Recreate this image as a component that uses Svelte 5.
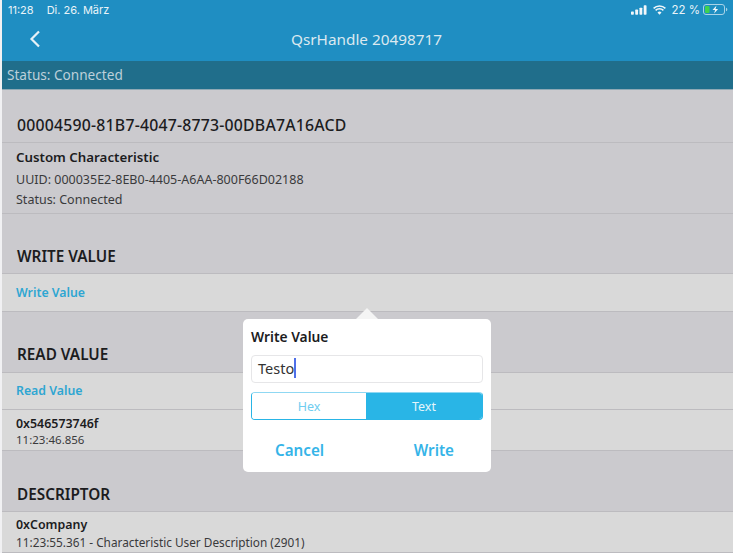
<script>
  let mode = 'Text';
  let value = 'Testo';
</script>

<div class="screen">
  <div class="topbar">
    <div class="statusbar">
      <span class="clock">11:28</span>
      <span class="date">Di. 26. März</span>
      <span class="spacer"></span>
      <svg class="signal" width="16" height="10" viewBox="0 0 17 10">
        <rect x="0" y="6.5" width="3" height="3.5" rx="0.7" />
        <rect x="4.5" y="4.5" width="3" height="5.5" rx="0.7" />
        <rect x="9" y="2.5" width="3" height="7.5" rx="0.7" />
        <rect x="13.5" y="0" width="3" height="10" rx="0.7" />
      </svg>
      <svg class="wifi" width="13" height="10" viewBox="0 0 13 10">
        <path d="M0.6 3.4a8.4 8.4 0 0 1 11.8 0" />
        <path d="M2.6 5.4a5.5 5.5 0 0 1 7.8 0" />
        <path class="dot" d="M6.5 9.8 4.5 7.5a2.8 2.8 0 0 1 4 0z" />
      </svg>
      <span class="pct">22 %</span>
      <svg class="battery" width="25" height="11" viewBox="0 0 25 11">
        <rect x="0.5" y="0.5" width="21" height="10" rx="2.5" class="shell" />
        <rect x="2" y="2" width="4.5" height="7" rx="1" class="level" />
        <path d="M13.5 1.5 9.5 6h2.6l-1 3.5 4-4.5h-2.6z" class="bolt" />
        <path d="M23 3.7c1 .3 1.3 1 1.3 1.8s-.3 1.5-1.3 1.8z" class="nub" />
      </svg>
    </div>
    <div class="navbar">
      <svg class="back" width="12" height="18" viewBox="0 0 12 18">
        <path d="M10 1.5 2.5 9l7.5 7.5" />
      </svg>
      <span class="title">QsrHandle 20498717</span>
    </div>
  </div>
  <div class="connection">Status: Connected</div>

  <div class="content">
    <h2 class="uuid">00004590-81B7-4047-8773-00DBA7A16ACD</h2>
    <div class="info">
      <strong>Custom Characteristic</strong>
      <span>UUID: 000035E2-8EB0-4405-A6AA-800F66D02188</span>
      <span>Status: Connected</span>
    </div>

    <h3 class="first">WRITE VALUE</h3>
    <div class="row action">Write Value</div>

    <h3>READ VALUE</h3>
    <div class="row action short">Read Value</div>
    <div class="row value read">
      <strong>0x546573746f</strong>
      <span>11:23:46.856</span>
    </div>

    <h3 class="last">DESCRIPTOR</h3>
    <div class="row value">
      <strong>0xCompany</strong>
      <span class="long">11:23:55.361 - Characteristic User Description (2901)</span>
    </div>
  </div>

  <div class="popover">
    <div class="arrow"></div>
    <div class="pop-title">Write Value</div>
    <div class="field"><span>{value}</span><i class="caret"></i></div>
    <div class="segment">
      {#each ['Hex', 'Text'] as m}
        <button class:on={mode === m} onclick={() => (mode = m)}>{m}</button>
      {/each}
    </div>
    <div class="buttons">
      <button>Cancel</button>
      <button>Write</button>
    </div>
  </div>
</div>

<style>
  :global(body) {
    background: #f1f1f3;
    overflow: hidden;
  }

  .screen {
    position: relative;
    width: 733px;
    height: 553px;
    padding-left: 2px;
    box-sizing: border-box;
    overflow: hidden;
    font-family: "Noto Sans", sans-serif;
    color: #1f1f21;
  }

  .topbar {
    background: #1f8ec2;
    color: #e9f3f8;
    height: 61px;
  }

  .statusbar {
    display: flex;
    align-items: center;
    height: 18px;
    padding: 1px 5px 0 6px;
    box-sizing: border-box;
    font-size: 11px;
    font-family: "Inter", sans-serif;
  }
  .clock { margin-right: 13px; }
  .spacer { flex: 1; }
  .signal { fill: #f2f7fa; margin-right: 6px; }
  .wifi { margin-right: 5px; fill: none; stroke: #f2f7fa; stroke-width: 1.5; }
  .wifi .dot { fill: #f2f7fa; stroke: none; }
  .pct { margin-right: 3px; font-size: 11.5px; }
  .shell { fill: none; stroke: #a9d3e7; }
  .level { fill: #3fd24f; }
  .bolt { fill: #f2f7fa; }
  .nub { fill: #a9d3e7; }

  .navbar {
    position: relative;
    display: flex;
    justify-content: center;
    align-items: center;
    height: 43px;
    padding-bottom: 2px;
    box-sizing: border-box;
  }
  .back {
    position: absolute;
    left: 27px;
    top: 12px;
    fill: none;
    stroke: #e6f1f7;
    stroke-width: 2.2;
  }
  .title {
    font-size: 15.3px;
    color: #dbe9f0;
    margin-right: 2px;
  }

  .connection {
    height: 29px;
    line-height: 28px;
    padding-left: 5px;
    font-size: 13.6px;
    background: #206e8b;
    color: #bcd0da;
    border-bottom: 1px solid #8fa9b5;
    box-sizing: border-box;
  }

  .content {
    background: #cbcace;
    height: 463px;
  }

  .uuid {
    margin: 0;
    padding: 0 14px 0 15px;
    height: 53px;
    line-height: 70px;
    font-size: 15.8px;
    letter-spacing: 0.22px;
    font-weight: 500;
    box-sizing: border-box;
    border-bottom: 1px solid #bcbbbf;
    color: #1c1c1e;
  }

  .info {
    display: flex;
    flex-direction: column;
    height: 71px;
    padding: 2px 14px 0;
    box-sizing: border-box;
    border-bottom: 1px solid #bcbbbf;
    font-size: 12.5px;
    line-height: 20px;
    color: #3a3a3c;
  }
  .info strong {
    font-size: 13.3px;
    line-height: 25px;
    font-weight: 600;
    color: #1c1c1e;
  }

  h3 {
    margin: 0;
    padding: 0 15px;
    height: 61px;
    line-height: 84px;
    font-size: 15.3px;
    font-weight: 600;
    box-sizing: border-box;
    border-bottom: 1px solid #bcbbbf;
    color: #1c1c1e;
  }
  h3.first { height: 60px; line-height: 85px; }
  h3.last { line-height: 86px; }

  .row {
    background: #d9d9d9;
    padding: 0 14px;
    box-sizing: border-box;
    border-bottom: 1px solid #bcbbbf;
  }
  .action {
    height: 38px;
    line-height: 38px;
    font-size: 12.3px;
    font-weight: 600;
    color: #2ea6d2;
  }
  .action.short { height: 37px; line-height: 36px; }
  .value {
    display: flex;
    flex-direction: column;
    height: 41px;
    padding-top: 4px;
    font-size: 11.5px;
    line-height: 17px;
    color: #3a3a3c;
  }
  .value.read { padding-top: 5px; line-height: 16px; }
  .value strong {
    font-size: 12.4px;
    line-height: 18px;
    font-weight: 600;
    color: #1c1c1e;
  }
  .value.read strong { line-height: 17px; }
  .long { font-size: 11.8px; }

  .popover {
    position: absolute;
    left: 243px;
    top: 319px;
    width: 248px;
    height: 153px;
    padding: 8px;
    box-sizing: border-box;
    background: #fff;
    border-radius: 5px;
  }
  .arrow {
    position: absolute;
    left: 113px;
    top: -11px;
    width: 0;
    height: 0;
    border-left: 11px solid transparent;
    border-right: 11px solid transparent;
    border-bottom: 11px solid #f4f4f4;
  }
  .pop-title {
    font-size: 13.8px;
    font-weight: 600;
    line-height: 20px;
    color: #1c1c1e;
  }
  .field {
    display: flex;
    align-items: center;
    height: 28px;
    margin-top: 8px;
    padding: 0 0 2px 6px;
    box-sizing: border-box;
    border: 1px solid #e6e6e8;
    border-radius: 4px;
    font-size: 14.5px;
    color: #333;
  }
  .caret {
    width: 2px;
    height: 20px;
    background: #4f6fe8;
  }
  .segment {
    display: flex;
    height: 28px;
    margin-top: 9px;
    box-sizing: border-box;
    border: 1px solid #29b5e6;
    border-top-color: #8fd8f3;
    border-radius: 4px;
    overflow: hidden;
  }
  .segment button {
    flex: 1;
    border: 0;
    padding: 0;
    background: #fff;
    color: #6fcdf0;
    font: 12.5px "Noto Sans", sans-serif;
  }
  .segment button.on {
    flex: none;
    width: 116px;
    background: #29b5e6;
    color: #e4f5fb;
  }
  .buttons {
    display: flex;
    justify-content: space-between;
    margin-top: 20px;
    padding: 0 29px 0 24px;
  }
  .buttons button {
    border: 0;
    padding: 0;
    background: none;
    color: #35b4e8;
    font: 600 15.2px "Noto Sans", sans-serif;
  }
</style>
